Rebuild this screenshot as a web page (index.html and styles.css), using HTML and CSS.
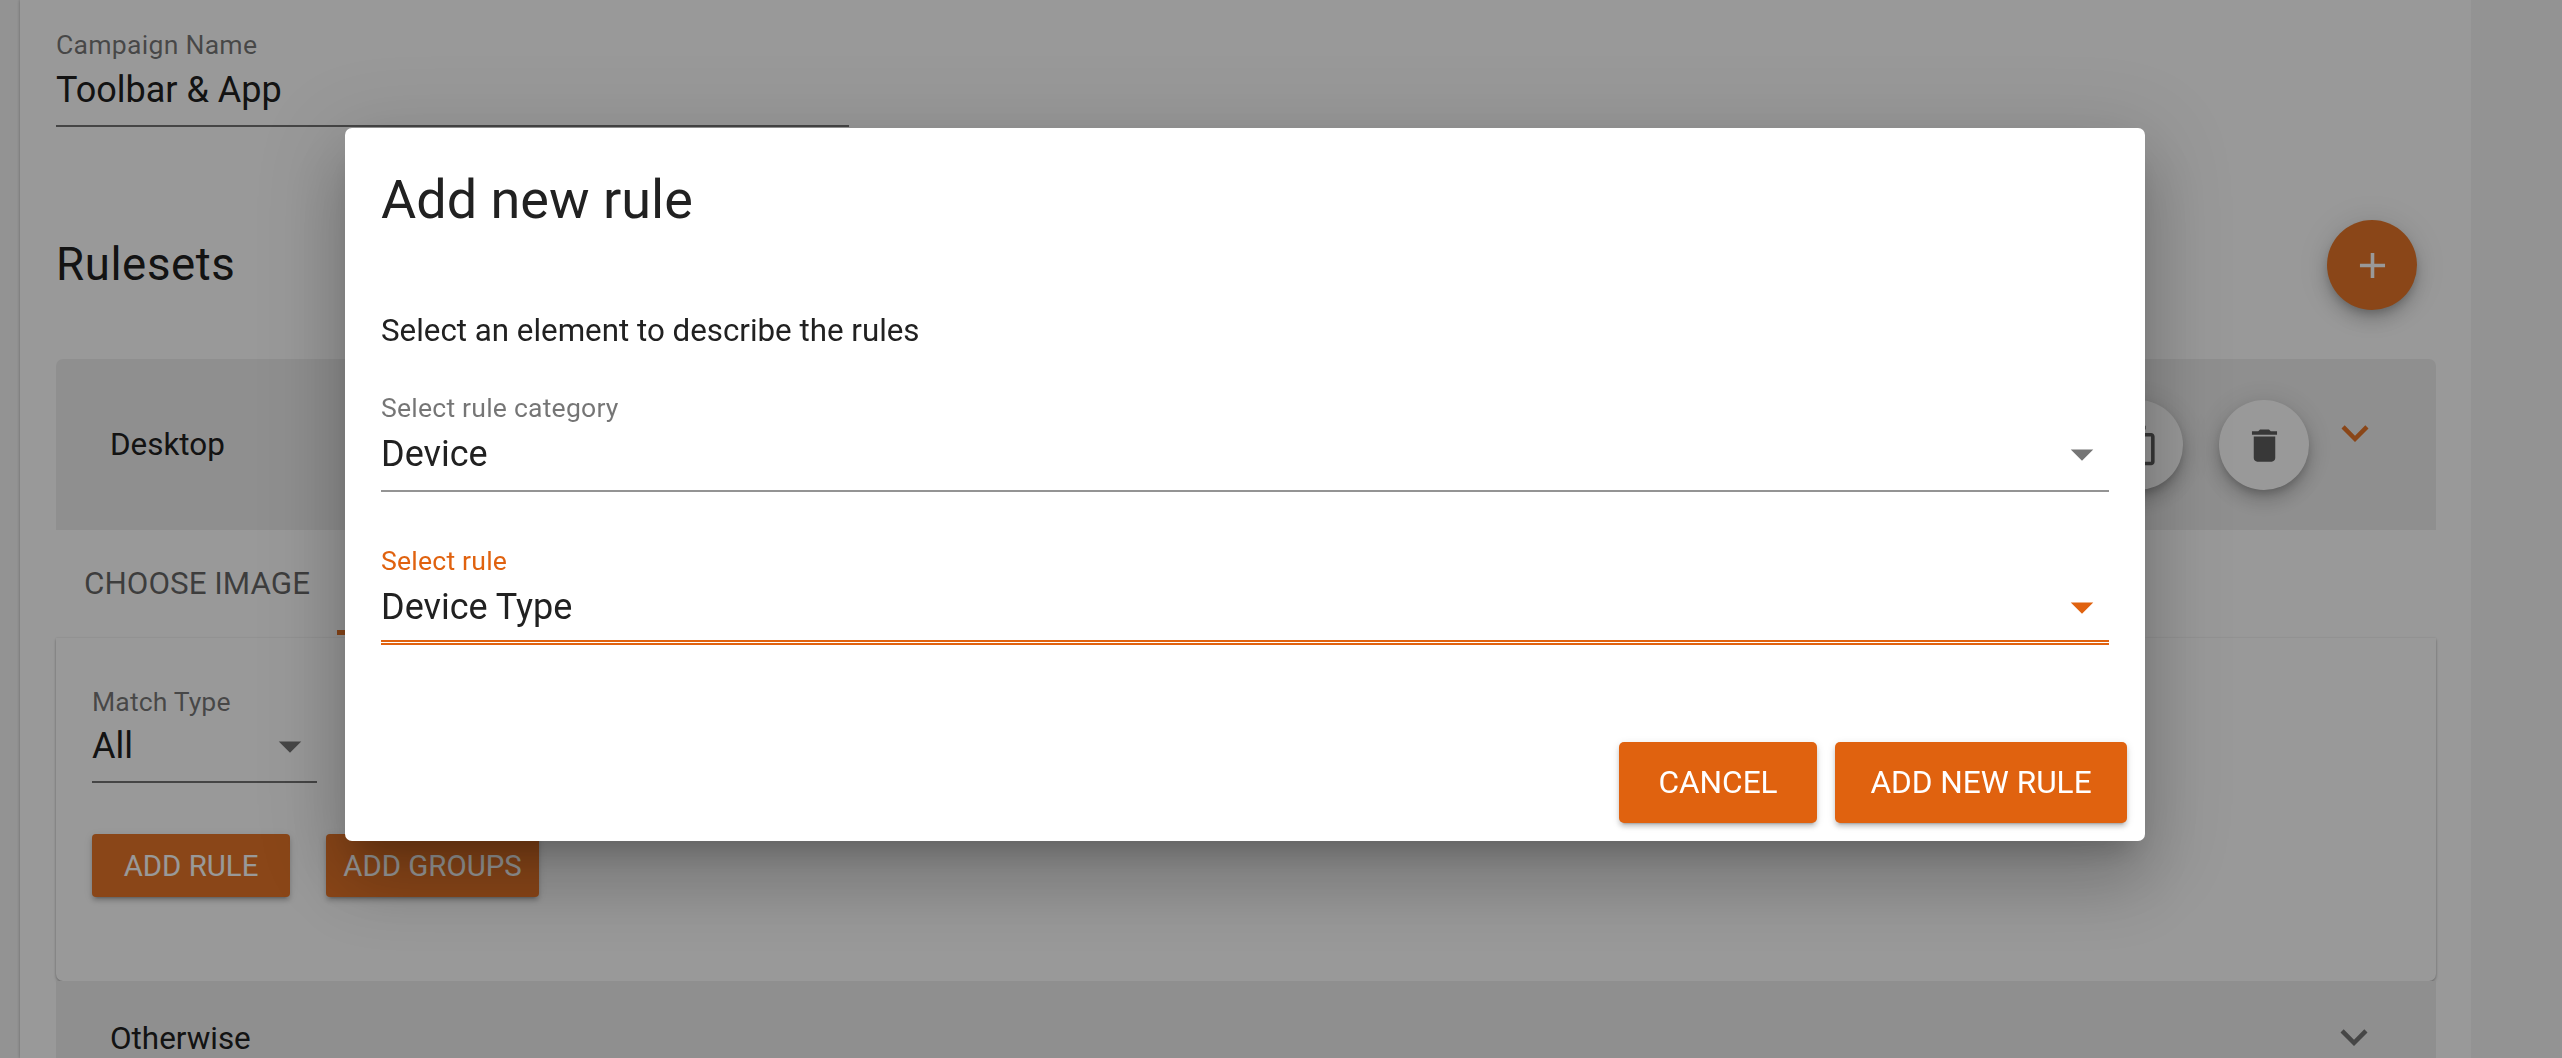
FILE: index.html
```html
<!DOCTYPE html>
<html lang="en">
<head>
<meta charset="utf-8">
<title>Add new rule</title>
<link rel="stylesheet" href="styles.css">
</head>
<body>
<div class="page">
  <main class="card">
    <div class="field campaign">
      <div class="label">Campaign Name</div>
      <div class="value">Toolbar &amp; App</div>
    </div>
    <div class="rulesets-head">
      <h2 class="rulesets-title">Rulesets</h2>
      <button class="fab"><svg class="icon" viewBox="0 0 24 24"><path d="M19 13h-6v6h-2v-6H5v-2h6V5h2v6h6v2z"/></svg></button>
    </div>
    <section class="acc-head">
      <span class="acc-name">Desktop</span>
      <div class="acc-actions">
        <button class="round"><svg class="icon" viewBox="0 0 24 24"><path d="M16 1H4c-1.1 0-2 .9-2 2v14h2V3h12V1zm3 4H8c-1.1 0-2 .9-2 2v14c0 1.1.9 2 2 2h11c1.1 0 2-.9 2-2V7c0-1.1-.9-2-2-2zm0 16H8V7h11v14z"/></svg></button>
        <button class="round"><svg class="icon" viewBox="0 0 24 24"><path d="M6 19c0 1.1.9 2 2 2h8c1.1 0 2-.9 2-2V7H6v12zM19 4h-3.5l-1-1h-5l-1 1H5v2h14V4z"/></svg></button>
        <svg class="chev chev-on" viewBox="0 0 24 24"><path d="M16.59 8.59L12 13.17 7.41 8.59 6 10l6 6 6-6z"/></svg>
      </div>
    </section>
    <nav class="tabs">
      <span class="tab">CHOOSE IMAGE</span>
      <span class="tab-on"></span>
    </nav>
    <section class="panel">
      <div class="match">
        <div class="match-label">Match Type</div>
        <div class="match-row"><span class="match-value">All</span><svg class="drop drop-dim" viewBox="0 0 24 24"><path d="M7 10l5 5 5-5z"/></svg></div>
      </div>
      <div class="panel-btns">
        <button class="btn-small btn-rule">ADD RULE</button>
        <button class="btn-small btn-groups">ADD GROUPS</button>
      </div>
    </section>
    <section class="acc-head acc-last">
      <span class="acc-name">Otherwise</span>
      <svg class="chev" viewBox="0 0 24 24"><path d="M16.59 8.59L12 13.17 7.41 8.59 6 10l6 6 6-6z"/></svg>
    </section>
  </main>
</div>
<div class="backdrop"></div>
<div class="dialog">
  <div class="dialog-body">
    <h1 class="dialog-title">Add new rule</h1>
    <p class="dialog-text">Select an element to describe the rules</p>
    <div class="sel sel-a">
      <div class="sel-label">Select rule category</div>
      <div class="sel-row"><span class="sel-value">Device</span><svg class="drop drop-grey" viewBox="0 0 24 24"><path d="M7 10l5 5 5-5z"/></svg></div>
    </div>
    <div class="sel sel-b">
      <div class="sel-label sel-label-on">Select rule</div>
      <div class="sel-row"><span class="sel-value">Device Type</span><svg class="drop drop-on" viewBox="0 0 24 24"><path d="M7 10l5 5 5-5z"/></svg></div>
    </div>
  </div>
  <div class="dialog-actions">
    <button class="btn btn-cancel">CANCEL</button>
    <button class="btn btn-add">ADD NEW RULE</button>
  </div>
</div>
</body>
</html>
```
FILE: styles.css
```css
* { box-sizing: border-box; }
html, body { margin: 0; height: 100%; }
body {
  background: #f5f5f5;
  font-family: Roboto, "Liberation Sans", sans-serif;
  color: #212121;
  overflow: hidden;
}
button { font-family: inherit; border: 0; cursor: pointer; padding: 0; }
.page { padding-left: 20px; width: 2471px; height: 1058px; overflow: hidden; }
.card {
  background: #fff;
  height: 1058px;
  padding: 0 35px 0 36px;
  box-shadow: 0 0 3px rgba(0,0,0,.3);
}
.campaign { width: 793px; padding-top: 30px; height: 127px; border-bottom: 2px solid rgba(0,0,0,.55); }
.label { font-size: 26.6px; letter-spacing: .25px; line-height: 30px; color: rgba(0,0,0,.54); }
.value { font-size: 36px; line-height: 42px; margin-top: 9px; }
.rulesets-head { display: flex; justify-content: space-between; height: 232px; padding-top: 93px; padding-right: 19px; }
.rulesets-title { margin: 1px 0 0; font-size: 45.6px; letter-spacing: .6px; font-weight: 400; line-height: 88px; }
.fab {
  width: 90px; height: 90px; border-radius: 50%;
  background: #e67628; color: #fff; display: flex; align-items: center; justify-content: center;
  box-shadow: 0 5px 9px -2px rgba(0,0,0,.2), 0 11px 18px rgba(0,0,0,.14), 0 2px 32px rgba(0,0,0,.12);
}
.icon { width: 43px; height: 43px; fill: currentColor; display: block; }
.acc-head {
  background: #efefef; height: 171px; padding: 0 0 0 54px;
  display: flex; align-items: flex-start; justify-content: space-between; border-radius: 7px 7px 0 0;
}
.acc-name { font-size: 31.4px; line-height: 40px; margin-top: 66px; }
.acc-actions { display: flex; align-items: flex-start; margin-right: 55px; }
.round {
  width: 90px; height: 90px; border-radius: 50%; margin-top: 41px; margin-left: 36px;
  background: #fff; display: flex; align-items: center; justify-content: center;
  box-shadow: 0 5px 9px -2px rgba(0,0,0,.2), 0 11px 18px rgba(0,0,0,.14), 0 2px 32px rgba(0,0,0,.12);
}
.round .icon { color: #212121; opacity: .72; }
.chev { width: 54px; height: 54px; display: block; fill: #757575; }
.chev-on { fill: #e67628; margin-top: 47px; margin-left: 19px; margin-right: -1px; }
.tabs { display: flex; height: 108px; align-items: flex-start; padding-left: 28px; }
.tab { font-size: 31.4px; line-height: 40px; margin-top: 34px; color: rgba(0,0,0,.6); }
.tab-on { margin-left: 27px; width: 300px; height: 75px; border-bottom: 5px solid #e67628; margin-top: 30px; }
.panel { height: 343px; padding: 49px 36px 0; border-radius: 0 0 7px 7px; box-shadow: 0 2px 3px rgba(0,0,0,.25), 0 0 2px rgba(0,0,0,.15); }
.match { width: 225px; border-bottom: 2px solid rgba(0,0,0,.55); height: 96px; }
.match-label { font-size: 26.6px; letter-spacing: .1px; line-height: 30px; color: rgba(0,0,0,.54); }
.match-row { display: flex; align-items: center; justify-content: space-between; height: 42px; margin-top: 8px; }
.match-value { font-size: 36px; line-height: 42px; }
.panel-btns { display: flex; gap: 36px; margin-top: 51px; }
.btn-small {
  height: 63px; background: #e67628; color: #fff; border-radius: 4px;
  font-size: 29.4px; box-shadow: 0 5px 2px -4px rgba(0,0,0,.2), 0 4px 4px rgba(0,0,0,.14), 0 2px 9px rgba(0,0,0,.12);
}
.btn-rule { width: 198px; }
.btn-groups { width: 213px; }
.acc-last { align-items: flex-start; padding-right: 55px; border-radius: 0; }
.acc-last .acc-name { margin-top: 38px; }
.acc-last .chev { margin-top: 29px; }
.drop { width: 54px; height: 54px; display: block; flex: none; }
.drop-dim { fill: rgba(0,0,0,.54); }
.drop-grey { fill: #757575; }
.drop-on { fill: #e0620f; }
.backdrop { position: fixed; inset: 0; background: rgba(0,0,0,.4); }
.dialog {
  position: absolute; left: 345px; top: 128px; width: 1800px; height: 713px;
  background: #fff; border-radius: 7px;
  box-shadow: 0 20px 27px -13px rgba(0,0,0,.2), 0 43px 68px 5px rgba(0,0,0,.14), 0 16px 83px 14px rgba(0,0,0,.12);
}
.dialog-body { padding: 43px 36px 0; }
.dialog-title { margin: 0; font-size: 54px; font-weight: 400; line-height: 58px; }
.dialog-text { margin: 84px 0 0; font-size: 31.3px; line-height: 36px; }
.sel-a { margin-top: 44px; border-bottom: 2px solid rgba(0,0,0,.42); height: 99px; }
.sel-b { margin-top: 54px; border-bottom: 5px double #e0620f; height: 99px; }
.sel-label { font-size: 26.6px; letter-spacing: .2px; line-height: 30px; color: rgba(0,0,0,.54); }
.sel-label-on { color: #e0620f; }
.sel-row { display: flex; align-items: center; justify-content: space-between; height: 40px; margin-top: 11px; }
.sel-value { font-size: 36px; line-height: 40px; }
.dialog-actions { display: flex; justify-content: flex-end; gap: 18px; padding: 0 18px; margin-top: 97px; }
.btn { height: 81px; background: #e0620f; color: #fff; border-radius: 5px; font-size: 31.6px; box-shadow: 0 5px 2px -4px rgba(0,0,0,.2), 0 4px 4px rgba(0,0,0,.14), 0 2px 9px rgba(0,0,0,.12); }
.btn-cancel { width: 198px; }
.btn-add { width: 292px; }
```
